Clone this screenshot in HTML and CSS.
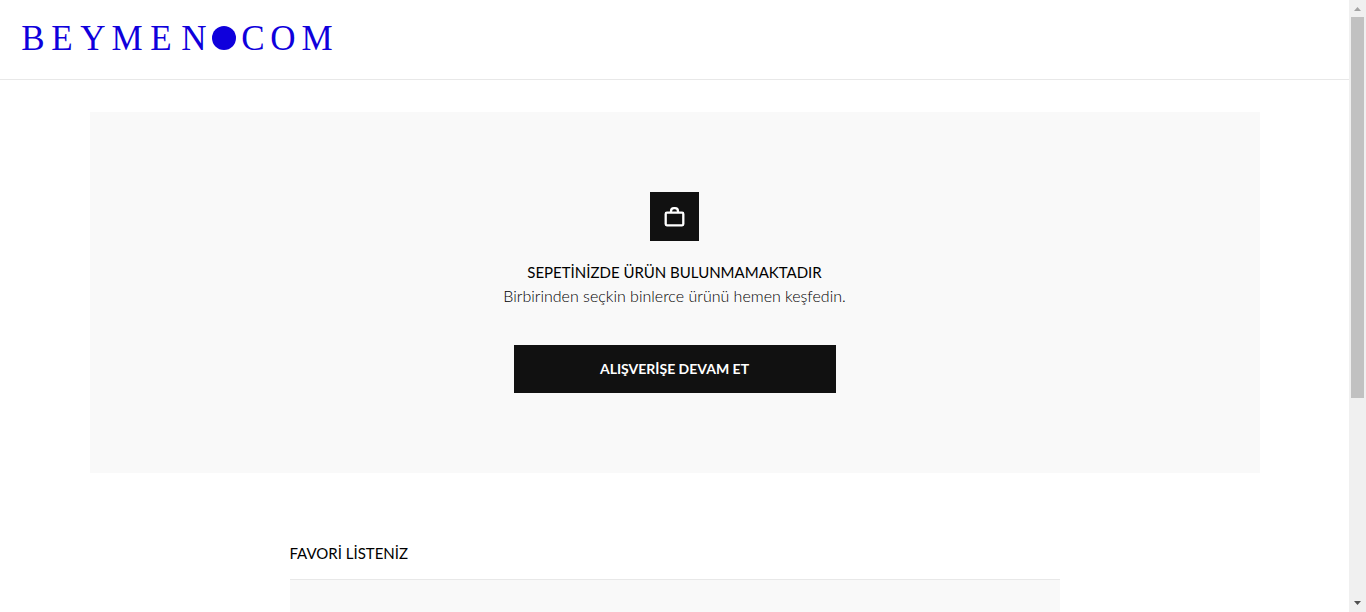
FILE: index.html
```html
<!DOCTYPE html>
<html lang="tr">
<head>
<meta charset="utf-8">
<meta name="viewport" content="width=device-width, initial-scale=1">
<title>Beymen.com</title>
<link rel="stylesheet" href="styles.css">
</head>
<body>
<div class="page">
  <header class="header">
    <a class="logo" href="#" aria-label="Beymen.com">
      <svg class="logo-mark" width="324" height="48" viewBox="0 0 324 48" aria-hidden="true">
        <text class="logo-text" x="17 46 77 111 145 178" y="36">BEYMEN</text>
        <circle cx="208" cy="24" r="12"/>
        <text class="logo-text" x="237 267 301" y="36">COM</text>
      </svg>
    </a>
  </header>
  <main>
    <section class="empty-cart">
      <span class="bag">
        <svg width="21" height="21" viewBox="0 0 21 21" fill="none" stroke="#fff" stroke-width="2.300" aria-hidden="true">
          <rect x="1.700" y="6.700" width="17.600" height="12.600" rx="1.200"/>
          <path d="M7 6.500V5.300C7 3.400 8.300 2.200 10 2.200h1C12.700 2.200 14 3.400 14 5.300V6.500"/>
        </svg>
      </span>
      <h1 class="empty-title">SEPETİNİZDE ÜRÜN BULUNMAMAKTADIR</h1>
      <p class="empty-text">Birbirinden seçkin binlerce ürünü hemen keşfedin.</p>
      <button class="continue" type="button">ALIŞVERİŞE DEVAM ET</button>
    </section>
    <section class="favorites">
      <h2 class="favorites-title">FAVORİ LİSTENİZ</h2>
      <div class="favorites-panel"></div>
    </section>
  </main>
</div>
<div class="scrollbar" aria-hidden="true">
  <svg class="arrow arrow-up" width="17" height="17" viewBox="0 0 17 17"><path d="M5 11h7L8.500 7z"/></svg>
  <div class="track"><div class="thumb"></div></div>
  <svg class="arrow" width="17" height="17" viewBox="0 0 17 17"><path d="M5 6h7l-3.500 4z"/></svg>
</div>
</body>
</html>
```
FILE: styles.css
```css
* {
  box-sizing: border-box;
}

body {
  margin: 0;
  height: 100vh;
  overflow: hidden;
  display: flex;
  background: #fff;
  color: #111;
  font-family: Lato, "Open Sans", sans-serif;
}

.page {
  flex: 1;
  min-width: 0;
  overflow: hidden;
}

.header {
  height: 80px;
  padding: 14px 16px;
  border-bottom: 1px solid #e8e8e8;
}

.logo,
.logo-mark {
  display: block;
}

.logo {
  width: fit-content;
}

.logo-mark {
  fill: #0f00dc;
}

.logo-text {
  font-family: "Liberation Serif", serif;
  font-size: 35px;
  text-anchor: middle;
}

.empty-cart {
  max-width: 1170px;
  margin: 32px auto 0;
  padding: 80px 16px;
  display: flex;
  flex-direction: column;
  align-items: center;
  background: #f9f9f9;
  text-align: center;
}

.bag {
  width: 49px;
  height: 49px;
  display: grid;
  place-items: center;
  background: #111;
}

.empty-title {
  margin: 19px 0 0;
  color: #000;
  font-size: 15px;
  line-height: 24px;
  font-weight: 400;
}

.empty-text {
  margin: 0 0 37px;
  color: #000;
  font-size: 16px;
  line-height: 24px;
  font-weight: 300;
}

.continue {
  width: 322px;
  max-width: 100%;
  height: 48px;
  padding: 0;
  border: 0;
  background: #111;
  color: #fff;
  font: 700 14px/24px Lato, "Open Sans", sans-serif;
}

.favorites {
  max-width: 770px;
  margin: 68px auto 0;
}

.favorites-title {
  margin: 0 0 14px;
  color: #000;
  font-size: 15px;
  line-height: 24px;
  font-weight: 400;
}

.favorites-panel {
  min-height: 360px;
  border-top: 1px solid #e8e8e8;
  background: #f9f9f9;
}

.scrollbar {
  width: 17px;
  display: flex;
  flex-direction: column;
  background: #f0f0f0;
}

.track {
  flex: 1;
  padding: 0 2px;
}

.thumb {
  height: 66%;
  background: #c1c1c1;
}

.arrow {
  display: block;
  fill: #505050;
}

.arrow-up {
  fill: #a3a3a3;
}
```
